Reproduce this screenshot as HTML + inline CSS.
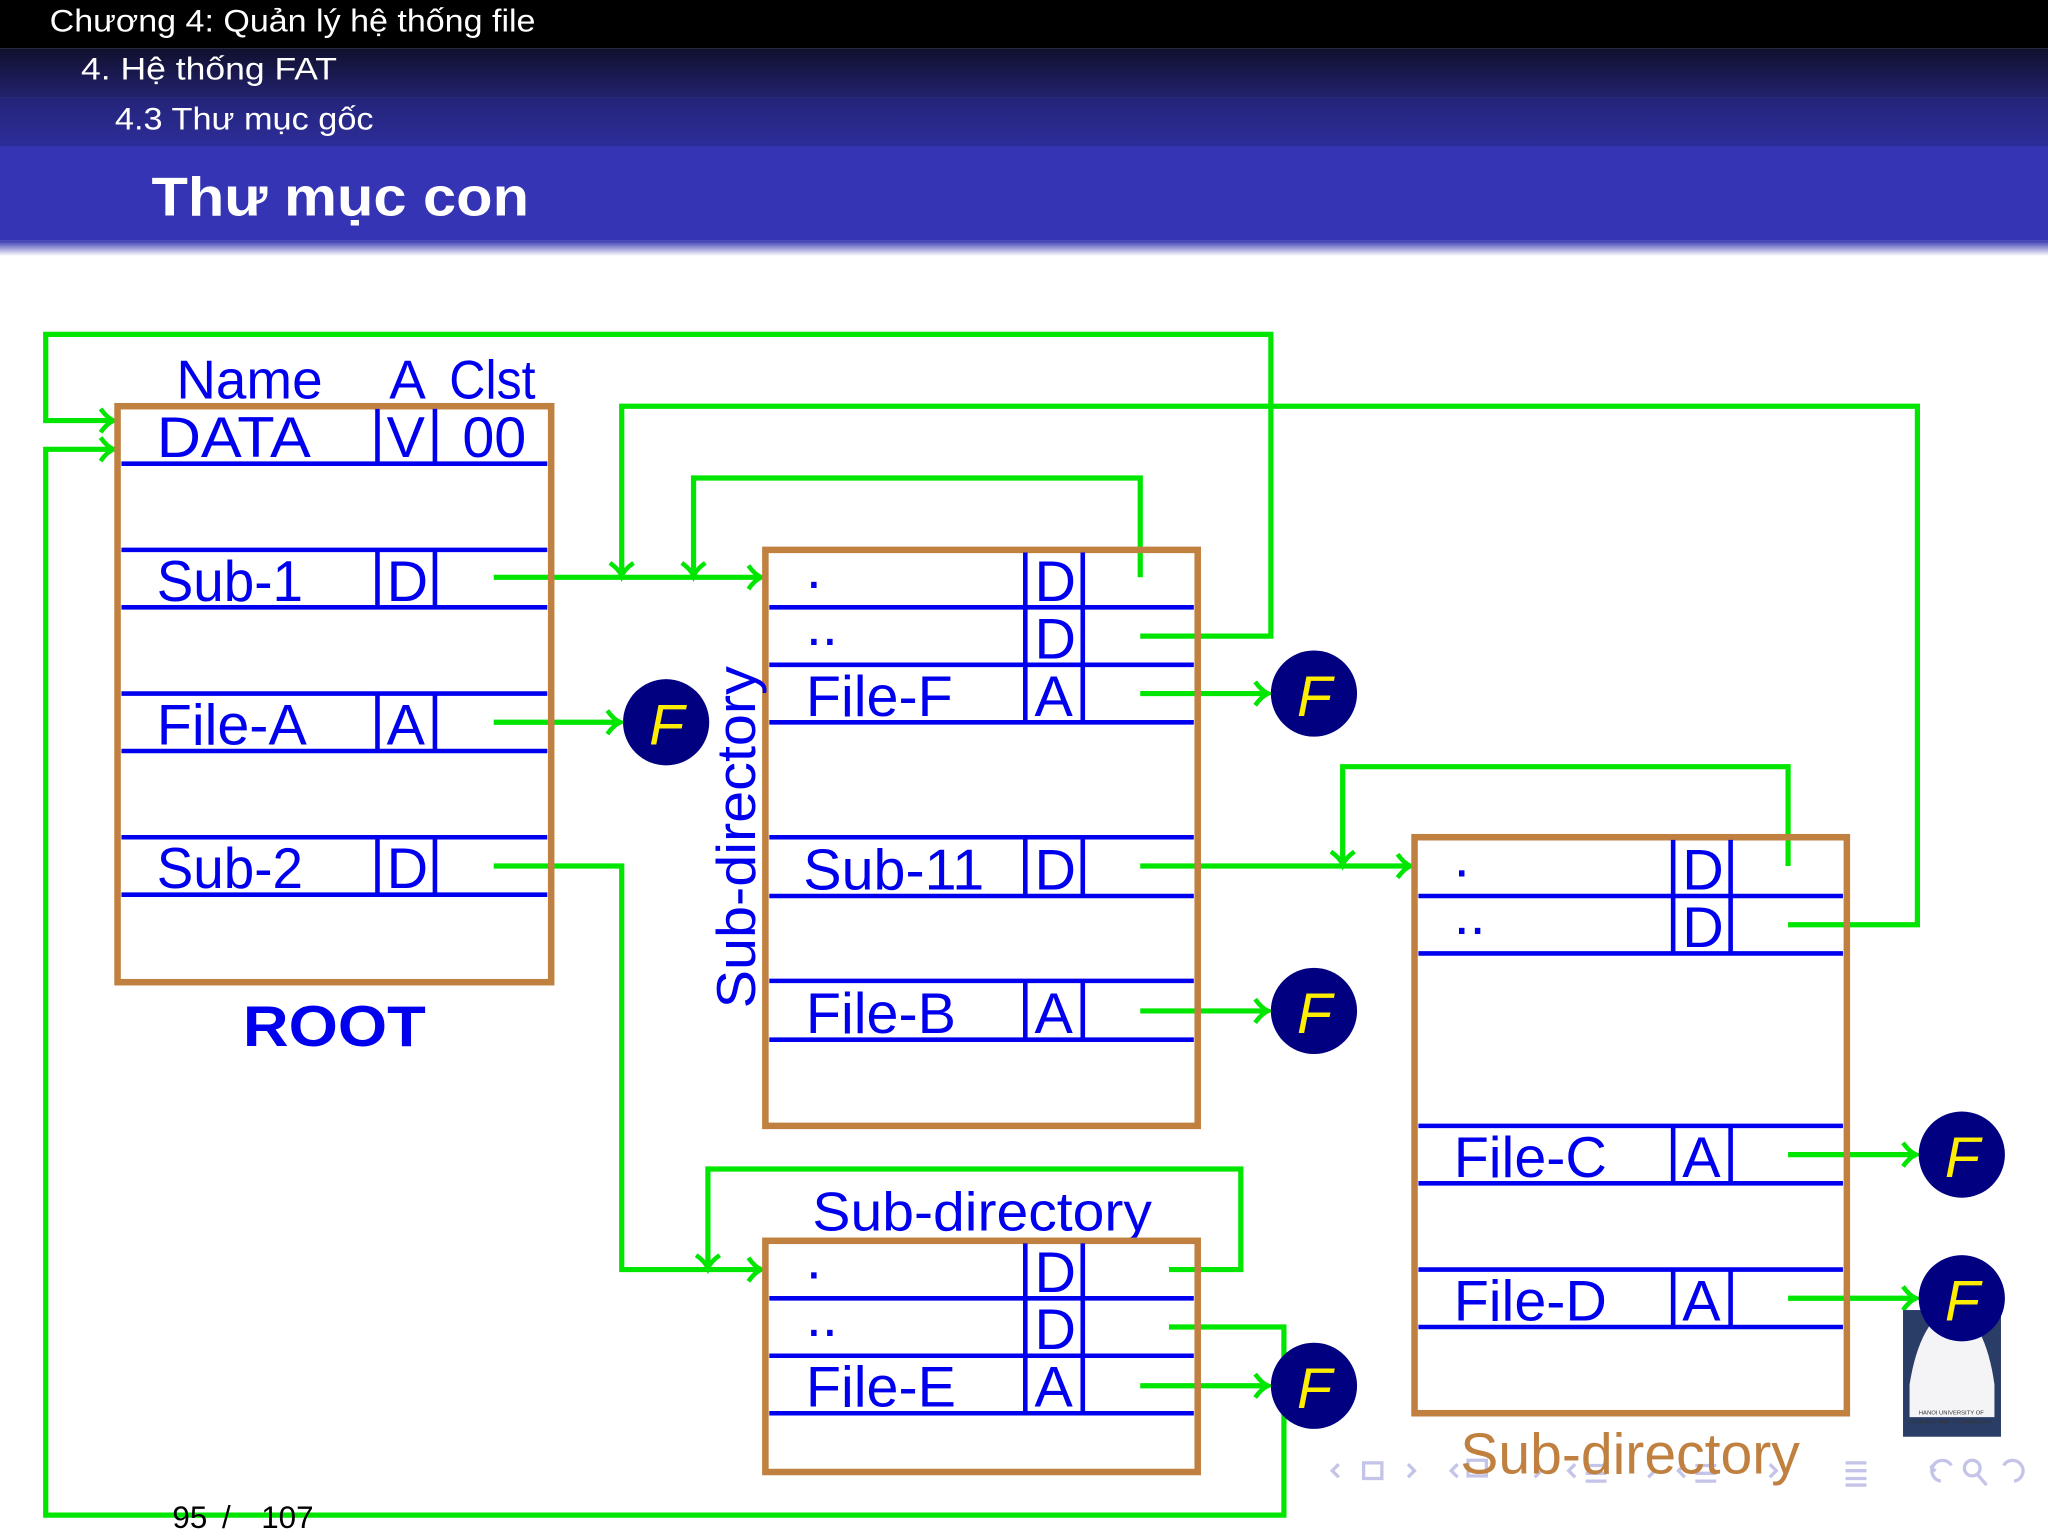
<!DOCTYPE html>
<html><head><meta charset="utf-8"><style>
html,body{margin:0;padding:0;background:#fff;width:2048px;height:1536px;overflow:hidden}
svg{display:block}
text{font-family:"Liberation Sans","DejaVu Sans",sans-serif}
</style></head><body>
<svg width="2048" height="1536" viewBox="0 0 1568 1176" xmlns="http://www.w3.org/2000/svg">
<defs>
<linearGradient id="g2" x1="0" y1="0" x2="0" y2="1"><stop offset="0" stop-color="#10102e"/><stop offset="1" stop-color="#22226e"/></linearGradient>
<linearGradient id="g3" x1="0" y1="0" x2="0" y2="1"><stop offset="0" stop-color="#24247a"/><stop offset="1" stop-color="#2d2d9a"/></linearGradient>
<linearGradient id="g5" x1="0" y1="0" x2="0" y2="1"><stop offset="0" stop-color="#3535b0"/><stop offset="1" stop-color="#ffffff"/></linearGradient>
<marker id="ar" markerUnits="userSpaceOnUse" markerWidth="20" markerHeight="24" refX="12" refY="12" orient="auto" viewBox="0 0 20 24">
<path d="M3,3 Q8,10 13,12 Q8,14 3,21" fill="none" stroke="#00e600" stroke-width="3.5"/>
</marker>
</defs>
<rect x="0" y="0" width="1568" height="37" fill="#000"/>
<rect x="0" y="37" width="1568" height="38" fill="url(#g2)"/>
<rect x="0" y="75" width="1568" height="38" fill="url(#g3)"/>
<rect x="0" y="112" width="1568" height="72" fill="#3434b4"/>
<rect x="0" y="184" width="1568" height="12" fill="url(#g5)"/>
<text x="38" y="24" font-size="24" fill="#fff" textLength="372" lengthAdjust="spacingAndGlyphs">Chương 4: Quản lý hệ thống file</text>
<text x="62" y="61" font-size="24" fill="#fff" textLength="196" lengthAdjust="spacingAndGlyphs">4. Hệ thống FAT</text>
<text x="88" y="99" font-size="24" fill="#fff" textLength="198" lengthAdjust="spacingAndGlyphs">4.3 Thư mục gốc</text>
<text x="116" y="165" font-size="42" font-weight="bold" fill="#fff" textLength="289" lengthAdjust="spacingAndGlyphs">Thư mục con</text>

<g fill="none" stroke="#00e600" stroke-width="4">
<polyline points="873,487 973,487 973,256 35,256 35,322 86,322" marker-end="url(#ar)"/>
<polyline points="895,1016 983,1016 983,1160 35,1160 35,344 86,344" marker-end="url(#ar)"/>
<polyline points="378,442 582,442" marker-end="url(#ar)"/>
<polyline points="1369,708 1468,708 1468,311 476,311 476,440" marker-end="url(#ar)"/>
<polyline points="873,442 873,366 531,366 531,440" marker-end="url(#ar)"/>
<polyline points="378,553 474,553" marker-end="url(#ar)"/>
<polyline points="378,663 476,663 476,972 582,972" marker-end="url(#ar)"/>
<polyline points="895,972 950,972 950,895 542,895 542,970" marker-end="url(#ar)"/>
<polyline points="873,1061 970,1061" marker-end="url(#ar)"/>
<polyline points="873,531 970,531" marker-end="url(#ar)"/>
<polyline points="873,774 970,774" marker-end="url(#ar)"/>
<polyline points="873,663 1079,663" marker-end="url(#ar)"/>
<polyline points="1369,663 1369,587 1028,587 1028,661" marker-end="url(#ar)"/>
<polyline points="1369,884 1466,884" marker-end="url(#ar)"/>
<polyline points="1369,994 1466,994" marker-end="url(#ar)"/>
</g>

<!-- logo -->
<g>
<rect x="1457" y="1003" width="75" height="97" fill="#2a3d66"/>
<path d="M1462,1085 L1462,1060 Q1470,1010 1495,1000 Q1520,1010 1527,1060 L1527,1085 Z" fill="#f4f4f6"/>
<text x="1494" y="1083" font-size="4.5" fill="#333" text-anchor="middle">HANOI UNIVERSITY OF</text>
<text x="1494" y="1090" font-size="4.5" fill="#333" text-anchor="middle">SCIENCE AND TECHNOLOGY</text>
</g>

<g fill="#0000ee" font-size="44">
<text x="135" y="305" font-size="42">Name</text><text x="298" y="305" font-size="42">A</text><text x="344" y="305" font-size="42" textLength="66" lengthAdjust="spacingAndGlyphs">Clst</text>
<rect x="90" y="311" width="332" height="441" fill="none" stroke="#c08040" stroke-width="5"/>
<g stroke="#0000ee" stroke-width="3.5" fill="none">
<line x1="93" y1="355" x2="419" y2="355"/>
<line x1="289" y1="313" x2="289" y2="355"/><line x1="333" y1="313" x2="333" y2="355"/>
<line x1="93" y1="421" x2="419" y2="421"/><line x1="93" y1="465" x2="419" y2="465"/>
<line x1="289" y1="421" x2="289" y2="465"/><line x1="333" y1="421" x2="333" y2="465"/>
<line x1="93" y1="531" x2="419" y2="531"/><line x1="93" y1="575" x2="419" y2="575"/>
<line x1="289" y1="531" x2="289" y2="575"/><line x1="333" y1="531" x2="333" y2="575"/>
<line x1="93" y1="641" x2="419" y2="641"/><line x1="93" y1="685" x2="419" y2="685"/>
<line x1="289" y1="641" x2="289" y2="685"/><line x1="333" y1="641" x2="333" y2="685"/>
</g>
<text x="120" y="350" textLength="118" lengthAdjust="spacingAndGlyphs">DATA</text><text x="296" y="350">V</text><text x="354" y="350">00</text>
<text x="120" y="460" textLength="112" lengthAdjust="spacingAndGlyphs">Sub-1</text><text x="296" y="460">D</text>
<text x="120" y="570">File-A</text><text x="296" y="570">A</text>
<text x="120" y="680" textLength="112" lengthAdjust="spacingAndGlyphs">Sub-2</text><text x="296" y="680">D</text>
<text x="186" y="801" font-weight="bold" font-size="44" textLength="140" lengthAdjust="spacingAndGlyphs">ROOT</text>

<rect x="586" y="421" width="331" height="441" fill="none" stroke="#c08040" stroke-width="5"/>
<g stroke="#0000ee" stroke-width="3.5" fill="none">
<line x1="589" y1="465" x2="914" y2="465"/><line x1="589" y1="509" x2="914" y2="509"/><line x1="589" y1="553" x2="914" y2="553"/>
<line x1="785" y1="423" x2="785" y2="553"/><line x1="829" y1="423" x2="829" y2="553"/>
<line x1="589" y1="641" x2="914" y2="641"/><line x1="589" y1="686" x2="914" y2="686"/>
<line x1="785" y1="641" x2="785" y2="686"/><line x1="829" y1="641" x2="829" y2="686"/>
<line x1="589" y1="751" x2="914" y2="751"/><line x1="589" y1="796" x2="914" y2="796"/>
<line x1="785" y1="751" x2="785" y2="796"/><line x1="829" y1="751" x2="829" y2="796"/>
</g>
<text x="617" y="450">.</text><text x="792" y="460">D</text>
<text x="617" y="494">..</text><text x="792" y="504">D</text>
<text x="617" y="548">File-F</text><text x="792" y="548">A</text>
<text x="615" y="681">Sub-11</text><text x="792" y="681">D</text>
<text x="617" y="791">File-B</text><text x="792" y="791">A</text>
<text transform="translate(578,772) rotate(-90)" font-size="42" textLength="262" lengthAdjust="spacingAndGlyphs">Sub-directory</text>

<text x="622" y="942" font-size="42" textLength="260" lengthAdjust="spacingAndGlyphs">Sub-directory</text>
<rect x="586" y="950" width="331" height="177" fill="none" stroke="#c08040" stroke-width="5"/>
<g stroke="#0000ee" stroke-width="3.5" fill="none">
<line x1="589" y1="994" x2="914" y2="994"/><line x1="589" y1="1038" x2="914" y2="1038"/><line x1="589" y1="1082" x2="914" y2="1082"/>
<line x1="785" y1="952" x2="785" y2="1082"/><line x1="829" y1="952" x2="829" y2="1082"/>
</g>
<text x="617" y="979">.</text><text x="792" y="989">D</text>
<text x="617" y="1023">..</text><text x="792" y="1033">D</text>
<text x="617" y="1077">File-E</text><text x="792" y="1077">A</text>

<rect x="1083" y="641" width="331" height="441" fill="none" stroke="#c08040" stroke-width="5"/>
<g stroke="#0000ee" stroke-width="3.5" fill="none">
<line x1="1086" y1="686" x2="1411" y2="686"/><line x1="1086" y1="730" x2="1411" y2="730"/>
<line x1="1281" y1="643" x2="1281" y2="730"/><line x1="1325" y1="643" x2="1325" y2="730"/>
<line x1="1086" y1="862" x2="1411" y2="862"/><line x1="1086" y1="906" x2="1411" y2="906"/>
<line x1="1281" y1="862" x2="1281" y2="906"/><line x1="1325" y1="862" x2="1325" y2="906"/>
<line x1="1086" y1="972" x2="1411" y2="972"/><line x1="1086" y1="1016" x2="1411" y2="1016"/>
<line x1="1281" y1="972" x2="1281" y2="1016"/><line x1="1325" y1="972" x2="1325" y2="1016"/>
</g>
<text x="1113" y="671">.</text><text x="1288" y="681">D</text>
<text x="1113" y="715">..</text><text x="1288" y="725">D</text>
<text x="1113" y="901">File-C</text><text x="1288" y="901">A</text>
<text x="1113" y="1011">File-D</text><text x="1288" y="1011">A</text>
</g>

<g fill="none" stroke="#c4c4e8" stroke-width="2.5">
<path d="M1025,1121 L1020,1126 L1025,1131"/><rect x="1044" y="1120" width="14" height="12"/><path d="M1078,1121 L1083,1126 L1078,1131"/>
<path d="M1116,1121 L1111,1126 L1116,1131"/><rect x="1124" y="1118" width="14" height="12"/><path d="M1175,1121 L1180,1126 L1175,1131"/>
<path d="M1206,1121 L1201,1126 L1206,1131"/><path d="M1214,1122h16M1214,1128h16M1214,1134h16"/><path d="M1262,1121 L1267,1126 L1262,1131"/>
<path d="M1290,1121 L1285,1126 L1290,1131"/><path d="M1298,1122h16M1298,1128h16M1298,1134h16"/><path d="M1355,1121 L1360,1126 L1355,1131"/>
<path d="M1413,1120h16M1413,1126h16M1413,1132h16M1413,1137h16"/>
<path d="M1494,1122 A8,8 0 1,0 1486,1134 M1478,1124 l3,-3 m-3,3 l4,2"/>
<circle cx="1510" cy="1124" r="6"/><path d="M1514,1129 L1521,1137"/>
<path d="M1534,1122 A8,8 0 1,1 1542,1134"/>
</g>
<text x="1118" y="1128" font-size="44" fill="#c08040" textLength="260" lengthAdjust="spacingAndGlyphs">Sub-directory</text>
<text x="132" y="1170" font-size="24" fill="#000">95</text>
<text x="170" y="1170" font-size="24" fill="#000">/</text>
<text x="200" y="1170" font-size="24" fill="#000">107</text>

<g>
<circle cx="510" cy="553" r="33" fill="#000080"/><text x="497" y="570" font-size="44" font-style="italic" fill="#ffee00">F</text>
<circle cx="1006" cy="531" r="33" fill="#000080"/><text x="993" y="548" font-size="44" font-style="italic" fill="#ffee00">F</text>
<circle cx="1006" cy="774" r="33" fill="#000080"/><text x="993" y="791" font-size="44" font-style="italic" fill="#ffee00">F</text>
<circle cx="1006" cy="1061" r="33" fill="#000080"/><text x="993" y="1078" font-size="44" font-style="italic" fill="#ffee00">F</text>
<circle cx="1502" cy="884" r="33" fill="#000080"/><text x="1489" y="901" font-size="44" font-style="italic" fill="#ffee00">F</text>
<circle cx="1502" cy="994" r="33" fill="#000080"/><text x="1489" y="1011" font-size="44" font-style="italic" fill="#ffee00">F</text>
</g>
</svg>
</body></html>
